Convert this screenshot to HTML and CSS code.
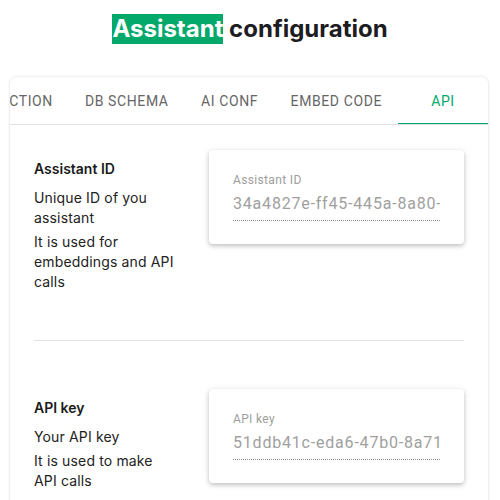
FILE: index.html
```html
<!DOCTYPE html>
<html>
<head>
<meta charset="utf-8">
<link rel="stylesheet" href="styles.css">
</head>
<body>
<h1 class="title"><span class="hl">Assistant</span> configuration</h1>
<div class="panel">
  <div class="tabs">
    <div class="tab">Instruction</div>
    <div class="tab">DB schema</div>
    <div class="tab">AI conf</div>
    <div class="tab">Embed code</div>
    <div class="tab active">API</div>
  </div>
  <div class="content">
    <div class="row">
      <div class="info">
        <div class="info-title">Assistant ID</div>
        <p>Unique ID of you assistant</p>
        <p>It is used for embeddings and API calls</p>
      </div>
      <div class="field-card">
        <div class="field-label">Assistant ID</div>
        <div class="field-value">34a4827e-ff45-445a-8a80-2c7d1e9b4f63</div>
      </div>
    </div>
    <hr class="divider">
    <div class="row">
      <div class="info">
        <div class="info-title">API key</div>
        <p>Your API key</p>
        <p>It is used to make API calls</p>
      </div>
      <div class="field-card">
        <div class="field-label">API key</div>
        <div class="field-value">51ddb41c-eda6-47b0-8a71-9f3e2b6c0d14</div>
      </div>
    </div>
  </div>
</div>
</body>
</html>
```
FILE: styles.css
```css
* { box-sizing: border-box; }
html, body { margin: 0; padding: 0; background: #fff; }
body {
  font-family: Inter, "Noto Sans", sans-serif;
  color: #222;
  width: 500px;
  height: 500px;
  overflow: hidden;
}
.title {
  margin: 14px 0 33px;
  text-align: center;
  font-size: 24px;
  font-weight: 700;
  line-height: 30px;
  color: #1c1c22;
}
.hl {
  background: #02a96b;
  color: #fff;
  display: inline-block;
  height: 30px;
}
.panel {
  margin-left: 10px;
  width: 478px;
  border-radius: 6px;
  background: #fff;
  box-shadow: 0 0 3px rgba(0,0,0,0.14), 0 1px 2px rgba(0,0,0,0.06);
  overflow: hidden;
}
.tabs {
  display: flex;
  justify-content: flex-end;
  height: 48px;
  border-bottom: 1px solid #e0e0e0;
  overflow: hidden;
}
.tab {
  flex: none;
  min-width: 90px;
  padding: 0 16px;
  display: flex;
  align-items: center;
  justify-content: center;
  font-family: Roboto, "Liberation Sans", sans-serif;
  font-size: 14px;
  font-weight: 400;
  letter-spacing: 0.6px;
  text-transform: uppercase;
  color: #666;
  position: relative;
}
.tab.active { color: #02a96b; }
.tab.active::after {
  content: "";
  position: absolute;
  left: 0; right: 0; bottom: -1px;
  height: 2px;
  background: #02a96b;
}
.content {
  padding: 25px 24px 40px;
  display: flex;
  flex-direction: column;
  gap: 48px;
}
.row {
  display: grid;
  grid-template-columns: 142px minmax(0, 1fr);
  column-gap: 33px;
  align-items: start;
}
.info { padding-top: 9px; font-size: 14px; line-height: 20px; letter-spacing: 0.15px; color: #222; }
.info-title { font-weight: 600; margin-bottom: 9px; color: #1a1a1a; letter-spacing: 0; }
.info p { margin: 0 0 4px; }
.info p:last-child { margin-bottom: 0; }
.divider { margin: 0; border: 0; border-top: 1px solid #e0e0e0; }
.field-card {
  min-width: 0;
  padding: 22px 24px 23px;
  border-radius: 4px;
  background: #fff;
  box-shadow: 0 2px 4px rgba(0,0,0,0.2), 0 1px 8px rgba(0,0,0,0.08);
  font-family: Roboto, "Liberation Sans", sans-serif;
}
.field-label { font-size: 12px; line-height: 16px; letter-spacing: 0.35px; color: #9e9e9e; }
.field-value {
  margin-top: 4px;
  font-size: 16px;
  line-height: 24px;
  letter-spacing: 0.8px;
  padding-bottom: 4px;
  color: #a0a0a0;
  white-space: nowrap;
  overflow: hidden;
  border-bottom: 1px dotted #8a8a8a;
}
```
